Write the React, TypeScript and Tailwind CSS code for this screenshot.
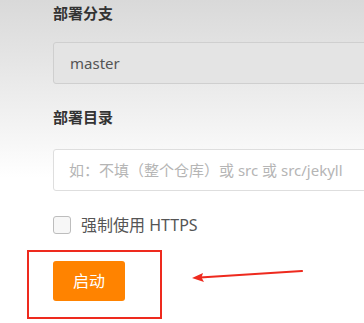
import React from "react";

export default function App() {
  const font = { fontFamily: '"Noto Sans", "Noto Sans CJK SC", sans-serif' };
  return (
    <div
      className="relative w-[364px] h-[323px] overflow-hidden bg-[linear-gradient(to_bottom,#d9d9d9_0%,#e6e6e6_20%,#f4f4f4_40%,#ffffff_55%,#ffffff_100%)]"
      style={font}
    >
      <div className="pl-[53px] pt-[3px]">
        <div className="text-[15px] leading-[20px] font-bold text-[#333]">部署分支</div>
        <div className="mt-[19px] w-[340px] h-[42px] border border-[#cfcfcf] rounded-[3px] bg-[#e4e4e4] flex items-center pl-[16px] text-[15px] text-[#555]">
          master
        </div>
        <div className="mt-[23px] text-[15px] leading-[20px] font-bold text-[#333]">部署目录</div>
        <div className="mt-[22px] w-[340px] h-[42px] border border-[#dedede] rounded-[3px] bg-white flex items-center pl-[15px] text-[15px] text-[#b5b5b5] whitespace-nowrap">
          如：不填（整个仓库）或 src 或 src/jekyll
        </div>
        <div className="mt-[24px] h-[20px] flex items-center gap-[10px]">
          <div className="w-[18px] h-[18px] border border-[#bdbdbd] rounded-[3px] bg-[#f7f7f7]" />
          <span className="text-[16px] text-[#555]">强制使用 HTTPS</span>
        </div>
      </div>
      <div className="ml-[27px] mt-[15px] w-[135px] h-[69px] border-2 border-[#ee2a1e] pl-[24px] pt-[9px]">
        <div className="w-[72px] h-[40px] rounded-[3px] bg-[#ff8300] flex items-center justify-center text-[16px] text-white">
          启动
        </div>
      </div>
      <svg className="absolute left-0 top-0" width="364" height="323" viewBox="0 0 364 323">
        <line x1="302" y1="271" x2="200" y2="277.5" stroke="#ee2a1e" strokeWidth="2.2" strokeLinecap="round" />
        <path d="M192 278 L203 273 L201.5 277.6 L204 282 Z" fill="#ee2a1e" />
      </svg>
    </div>
  );
}
